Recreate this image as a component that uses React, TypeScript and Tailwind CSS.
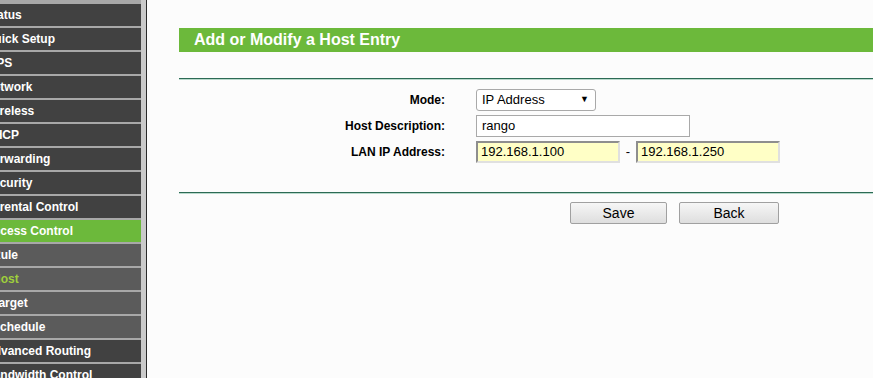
import React from "react";

type MenuItem = { label: string; sub?: boolean; active?: boolean; current?: boolean };

const menu: MenuItem[] = [
  { label: "Status" },
  { label: "Quick Setup" },
  { label: "WPS" },
  { label: "Network" },
  { label: "Wireless" },
  { label: "DHCP" },
  { label: "Forwarding" },
  { label: "Security" },
  { label: "Parental Control" },
  { label: "Access Control", active: true },
  { label: "Rule", sub: true },
  { label: "Host", sub: true, current: true },
  { label: "Target", sub: true },
  { label: "Schedule", sub: true },
  { label: "Advanced Routing" },
  { label: "Bandwidth Control" },
];

function Sidebar() {
  return (
    <div className="flex h-full shrink-0">
      <div className="w-[141px] h-full overflow-hidden bg-[#a8a8a8] pt-[4px] flex flex-col gap-[2px]">
        {menu.map((m) => (
          <div
            key={m.label}
            className={
              "h-[22px] shrink-0 flex items-center whitespace-nowrap text-[12px] font-bold " +
              (m.active
                ? "bg-[#6cb93b] text-white"
                : m.sub
                ? "bg-[#5b5b5b] text-white"
                : "bg-[#414141] text-white")
            }
          >
            <span
              className={
                (m.sub ? "ml-[-8px] " : "ml-[-15px] ") + (m.current ? "text-[#9fcf3c]" : "")
              }
            >
              {m.label}
            </span>
          </div>
        ))}
      </div>
      <div className="w-[5px] h-full bg-[#cacaca]" />
      <div className="w-[1px] h-full bg-[#2a2a2a]" />
    </div>
  );
}

function Label({ children }: { children: React.ReactNode }) {
  return (
    <div className="w-[266px] text-right text-[12px] font-bold text-black">{children}</div>
  );
}

export default function App() {
  return (
    <div
      className="w-[873px] h-[378px] overflow-hidden flex bg-[#fcfcfc]"
      style={{ fontFamily: '"Liberation Sans", Arial, sans-serif' }}
    >
      <Sidebar />
      <div className="flex-1 pl-[32px] pt-[28px]">
        <div className="h-[24px] bg-[#6cb93b] flex items-center pl-[15px]">
          <span className="text-white font-bold text-[16px]">Add or Modify a Host Entry</span>
        </div>
        <div className="mt-[26px] h-[1px] bg-[#2c6b55]" />
        <div className="h-[1px] bg-[#b9d9cc]" />

        <div className="mt-[9px] flex flex-col gap-[4px]">
          <div className="flex items-center h-[22px]">
            <Label>Mode:</Label>
            <div className="ml-[31px] w-[120px] h-[22px] border border-[#a9a9a9] rounded-[3px] bg-white flex items-center justify-between pl-[5px] pr-[6px] text-[13px] text-black">
              <span>IP Address</span>
              <span className="text-[9px]">▼</span>
            </div>
          </div>
          <div className="flex items-center h-[22px]">
            <Label>Host Description:</Label>
            <div className="ml-[31px] w-[214px] h-[22px] border border-[#a9a9a9] bg-white flex items-center pl-[5px] text-[13px] text-black">
              rango
            </div>
          </div>
          <div className="flex items-center h-[22px]">
            <Label>LAN IP Address:</Label>
            <div className="ml-[31px] w-[144px] h-[22px] border-2 border-t-[#8e8e8e] border-l-[#8e8e8e] border-r-[#e0e0e0] border-b-[#e0e0e0] bg-[#ffffc6] flex items-center pl-[3px] text-[13px] text-black">
              192.168.1.100
            </div>
            <span className="w-[16px] text-center text-[13px] text-black">-</span>
            <div className="w-[144px] h-[22px] border-2 border-t-[#8e8e8e] border-l-[#8e8e8e] border-r-[#e0e0e0] border-b-[#e0e0e0] bg-[#ffffc6] flex items-center pl-[3px] text-[13px] text-black">
              192.168.1.250
            </div>
          </div>
        </div>

        <div className="mt-[29px] h-[1px] bg-[#2c6b55]" />
        <div className="h-[1px] bg-[#b9d9cc]" />

        <div className="mt-[8px] flex gap-[12px] pl-[391px]">
          <button className="w-[97px] h-[22px] border border-[#a0a0a0] rounded-[2px] bg-gradient-to-b from-[#f6f6f6] to-[#dedede] text-[14px] text-black">
            Save
          </button>
          <button className="w-[100px] h-[22px] border border-[#a0a0a0] rounded-[2px] bg-gradient-to-b from-[#f6f6f6] to-[#dedede] text-[14px] text-black">
            Back
          </button>
        </div>
      </div>
    </div>
  );
}
